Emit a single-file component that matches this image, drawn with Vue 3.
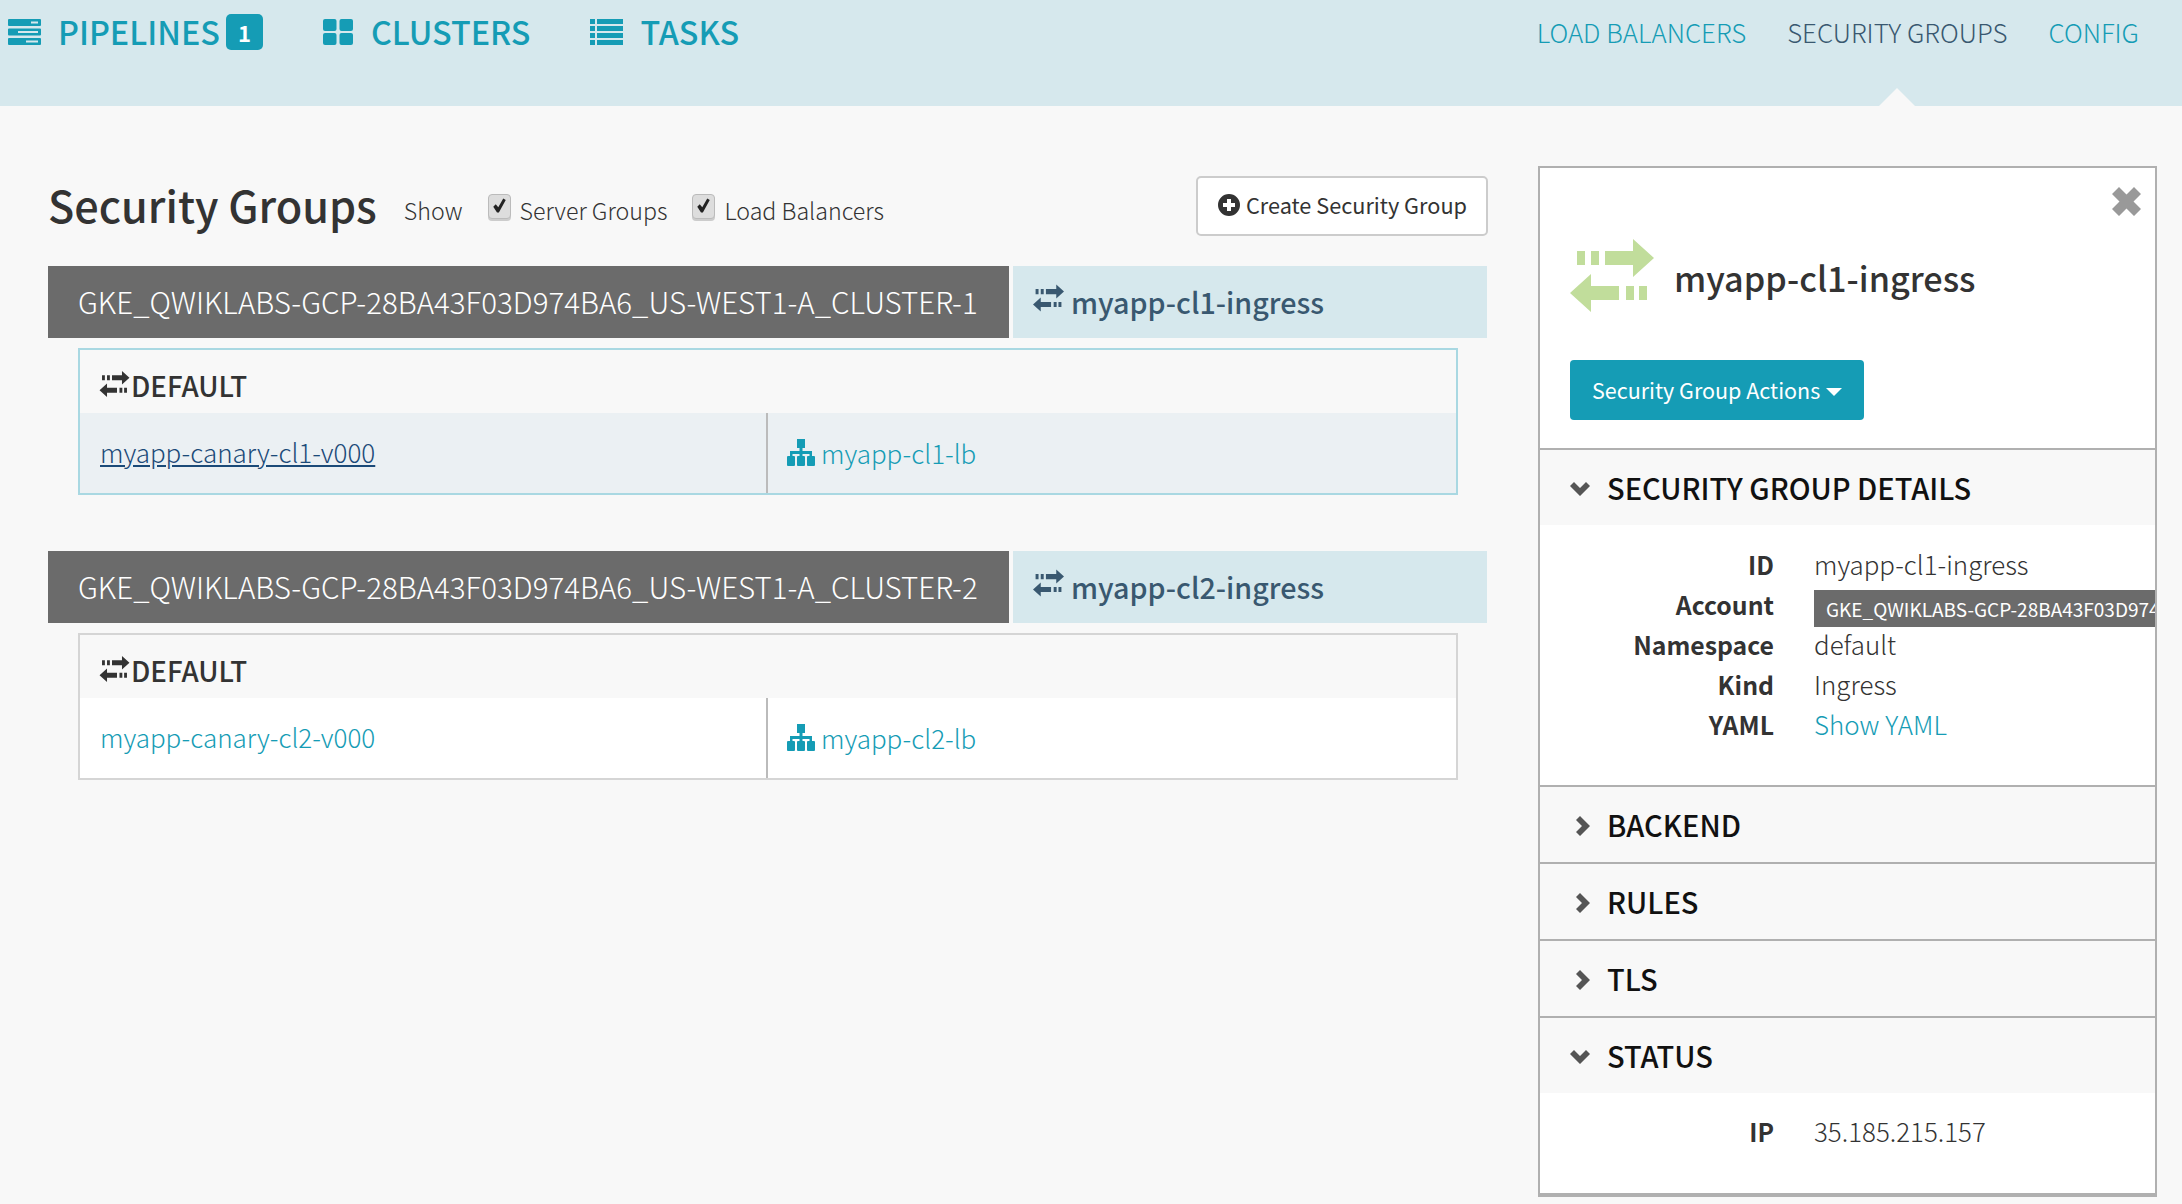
<script setup>
const exchange = 'M7 12h8v14H7zM21 12h8v14h-8zM35 12h28V0l21 19-21 19V26H35zM0 54l21-19v12h28v14H21v12zM56 47h8v14h-8zM69 47h8v14h-8z'
const sitemap = 'M10 0h8v9h-2.500v3H25v5h2a1 1 0 0 1 1 1v8a1 1 0 0 1-1 1h-6a1 1 0 0 1-1-1v-8a1 1 0 0 1 1-1h1.500v-2h-7V17H17a1 1 0 0 1 1 1v8a1 1 0 0 1-1 1h-6a1 1 0 0 1-1-1v-8a1 1 0 0 1 1-1h1.500v-2h-7v2H7a1 1 0 0 1 1 1v8a1 1 0 0 1-1 1H1a1 1 0 0 1-1-1v-8a1 1 0 0 1 1-1h2v-5h9.500V9H10z'

const clusters = [
  {
    account: 'GKE_QWIKLABS-GCP-28BA43F03D974BA6_US-WEST1-A_CLUSTER-1',
    ingress: 'myapp-cl1-ingress',
    serverGroup: 'myapp-canary-cl1-v000',
    loadBalancer: 'myapp-cl1-lb',
    active: true,
  },
  {
    account: 'GKE_QWIKLABS-GCP-28BA43F03D974BA6_US-WEST1-A_CLUSTER-2',
    ingress: 'myapp-cl2-ingress',
    serverGroup: 'myapp-canary-cl2-v000',
    loadBalancer: 'myapp-cl2-lb',
    active: false,
  },
]

const details = [
  { label: 'ID', value: 'myapp-cl1-ingress' },
  { label: 'Account', value: clusters[0].account, chip: true },
  { label: 'Namespace', value: 'default' },
  { label: 'Kind', value: 'Ingress' },
  { label: 'YAML', value: 'Show YAML', link: true },
]
</script>

<template>
  <div class="page">
    <header class="topbar">
      <nav class="primary">
        <a class="primary-item pipelines">
          <svg class="ico-pipelines" viewBox="0 0 33 26">
            <path fill-rule="evenodd" d="M1 0h31a1 1 0 0 1 1 1v5a1 1 0 0 1-1 1H1a1 1 0 0 1-1-1V1a1 1 0 0 1 1-1zm22 2.500v2h7v-2zM1 9.500h31a1 1 0 0 1 1 1v5a1 1 0 0 1-1 1H1a1 1 0 0 1-1-1v-5a1 1 0 0 1 1-1zm9 2.500v2h20v-2zM1 19h31a1 1 0 0 1 1 1v5a1 1 0 0 1-1 1H1a1 1 0 0 1-1-1v-5a1 1 0 0 1 1-1zm17 2.500v2h12v-2z" />
          </svg>
          <span>PIPELINES</span>
          <b class="badge">1</b>
        </a>
        <a class="primary-item clusters">
          <svg class="ico-clusters" viewBox="0 0 30 26">
            <rect width="13.500" height="12" rx="2" />
            <rect x="16.500" width="13.500" height="12" rx="2" />
            <rect y="14" width="13.500" height="12" rx="2" />
            <rect x="16.500" y="14" width="13.500" height="12" rx="2" />
          </svg>
          <span>CLUSTERS</span>
        </a>
        <a class="primary-item tasks">
          <svg class="ico-tasks" viewBox="0 0 33 26">
            <path d="M0 0h5v5H0zM7 0h26v5H7zM0 7h5v5H0zM7 7h26v5H7zM0 14h5v5H0zM7 14h26v5H7zM0 21h5v5H0zM7 21h26v5H7z" />
          </svg>
          <span>TASKS</span>
        </a>
      </nav>
      <nav class="secondary">
        <a>LOAD BALANCERS</a>
        <a class="current">SECURITY GROUPS</a>
        <a>CONFIG</a>
      </nav>
    </header>

    <main class="content">
      <section class="groups">
        <div class="toolbar">
          <h1>Security Groups</h1>
          <span class="show">Show</span>
          <label class="check">
            <span class="box"><svg viewBox="2 1 12 14"><path d="M3 8.500l2-2 2 2.500 4-7 2 1.200-5.500 10H6z" /></svg></span>
            Server Groups
          </label>
          <label class="check">
            <span class="box"><svg viewBox="2 1 12 14"><path d="M3 8.500l2-2 2 2.500 4-7 2 1.200-5.500 10H6z" /></svg></span>
            Load Balancers
          </label>
          <button class="create">
            <svg viewBox="0 0 22 22">
              <path fill-rule="evenodd" d="M11 0a11 11 0 1 1 0 22 11 11 0 0 1 0-22zM9 5v4H5v4h4v4h4v-4h4V9h-4V5z" />
            </svg>
            Create Security Group
          </button>
        </div>

        <article v-for="c in clusters" :key="c.account" class="cluster">
          <div class="cluster-head">
            <div class="account">{{ c.account }}</div>
            <div class="ingress">
              <svg viewBox="0 0 84 73"><path :d="exchange" /></svg>
              {{ c.ingress }}
            </div>
          </div>
          <div class="namespace" :class="{ active: c.active }">
            <div class="ns-title">
              <svg viewBox="0 0 84 73"><path :d="exchange" /></svg>DEFAULT
            </div>
            <div class="ns-row">
              <a class="sg-link">{{ c.serverGroup }}</a>
              <a class="lb-link">
                <svg viewBox="0 0 28 27"><path :d="sitemap" /></svg>
                {{ c.loadBalancer }}
              </a>
            </div>
          </div>
        </article>
      </section>

      <aside class="panel">
        <div class="panel-head">
          <svg class="close" viewBox="0 0 29 29">
            <path d="M7 0l7.500 7.500L22 0l7 7-7.500 7.500L29 22l-7 7-7.500-7.500L7 29l-7-7 7.500-7.500L0 7z" />
          </svg>
          <div class="panel-title">
            <svg viewBox="0 0 84 73"><path :d="exchange" /></svg>
            <h2>myapp-cl1-ingress</h2>
          </div>
          <button class="actions"><span>Security Group Actions</span><i class="caret"></i></button>
        </div>

        <div class="sec-head">
          <svg class="chev-down" viewBox="0 0 20 14"><path d="M4 0l6 6 6-6 4 4-10 10L0 4z" /></svg>
          <span>SECURITY GROUP DETAILS</span>
        </div>
        <dl class="sec-body details">
          <template v-for="d in details" :key="d.label">
            <dt>{{ d.label }}</dt>
            <dd>
              <span v-if="d.chip" class="chip">{{ d.value }}</span>
              <a v-else-if="d.link" class="yaml">{{ d.value }}</a>
              <template v-else>{{ d.value }}</template>
            </dd>
          </template>
        </dl>

        <div v-for="s in ['BACKEND', 'RULES', 'TLS']" :key="s" class="sec-head closed">
          <svg class="chev-right" viewBox="0 0 14 20"><path d="M4 0l10 10L4 20l-4-4 6-6-6-6z" /></svg>
          <span>{{ s }}</span>
        </div>

        <div class="sec-head">
          <svg class="chev-down" viewBox="0 0 20 14"><path d="M4 0l6 6 6-6 4 4-10 10L0 4z" /></svg>
          <span>STATUS</span>
        </div>
        <dl class="sec-body status">
          <dt>IP</dt>
          <dd>35.185.215.157</dd>
        </dl>
      </aside>
    </main>
  </div>
</template>

<style>
html,
body {
  margin: 0;
  background: #f8f8f8;
  overflow: hidden;
}
</style>

<style scoped>
.page {
  height: 1204px;
  overflow: hidden;
  font-family: 'Noto Sans CJK JP', 'Source Sans Pro', 'Open Sans', sans-serif;
  color: #333;
  background: #f8f8f8;
}

svg {
  display: block;
  flex: none;
  fill: currentColor;
}

/* top navigation */
.topbar {
  display: flex;
  justify-content: space-between;
  height: 106px;
  background: #d6e8ed;
}

.primary {
  display: flex;
  align-items: flex-start;
  padding: 14px 0 0 8px;
  color: #159cb5;
}

.primary-item {
  display: flex;
  align-items: center;
  height: 36px;
  font-size: 32.300px;
  line-height: 36px;
  font-weight: 500;
}

.primary-item span {
  padding-bottom: 3px;
}

.ico-pipelines {
  width: 33px;
  height: 26px;
  margin-right: 17px;
}

.ico-clusters {
  width: 30px;
  height: 26px;
  margin-right: 18px;
}

.ico-tasks {
  width: 33px;
  height: 26px;
  margin-right: 17px;
}

.clusters {
  margin-left: 60px;
}

.tasks {
  margin-left: 60px;
}

.badge {
  width: 37px;
  height: 36px;
  margin-left: 6px;
  border-radius: 5px;
  background: #159cb5;
  color: #fff;
  font-size: 22px;
  text-align: center;
}

.secondary {
  display: flex;
  gap: 41px;
  padding: 14px 43px 0 0;
  font-size: 25.800px;
  line-height: 36px;
  font-weight: 300;
  color: #159cb5;
}

.secondary a {
  position: relative;
  height: 36px;
}

.secondary .current {
  color: #395870;
}

.secondary .current::after {
  content: '';
  position: absolute;
  left: 50%;
  top: 74px;
  margin-left: -18px;
  border-left: 18px solid transparent;
  border-right: 18px solid transparent;
  border-bottom: 18px solid #f8f8f8;
}

/* main */
.content {
  display: flex;
  align-items: flex-start;
  padding: 60px 0 0 48px;
}

.groups {
  width: 1439px;
  padding-top: 10px;
}

.toolbar {
  display: flex;
  align-items: center;
  height: 60px;
  margin-bottom: 30px;
  font-size: 23.200px;
  line-height: 30px;
  font-weight: 300;
}

h1 {
  margin: 0 0 4px;
  font-size: 43.200px;
  line-height: 48px;
  font-weight: 500;
}

.show {
  margin-left: 27px;
  margin-top: 8px;
}

.check {
  display: flex;
  align-items: center;
  margin-left: 25px;
  margin-top: 8px;
}

.box {
  display: flex;
  align-items: center;
  justify-content: center;
  width: 21px;
  height: 23px;
  margin: -8px 9px 0 0;
  border: 1px solid #bbb;
  border-radius: 4px;
  background: #ddd;
  box-shadow: 0 2px 0 #ccc;
  color: #222;
}

.box svg {
  width: 15px;
  height: 18px;
}

.create {
  display: flex;
  align-items: center;
  gap: 6px;
  height: 60px;
  margin: 0 -1px 0 auto;
  padding: 0 19px 2px 20px;
  border: 2px solid #ccc;
  border-radius: 5px;
  background: #fff;
  color: #333;
  font: inherit;
  font-size: 21.700px;
  font-weight: 400;
}

.create svg {
  width: 22px;
  height: 22px;
}

.cluster {
  margin-bottom: 56px;
}

.cluster-head {
  display: flex;
  gap: 4px;
  height: 72px;
}

.account {
  width: 961px;
  padding-left: 30px;
  box-sizing: border-box;
  background: #6b6b6b;
  color: #fff;
  font-size: 29.500px;
  line-height: 70px;
  font-weight: 300;
  white-space: nowrap;
}

.ingress {
  display: flex;
  align-items: center;
  gap: 7px;
  flex: 1;
  padding: 0 0 2px 20px;
  background: #d6e8ed;
  color: #395870;
  font-size: 28.700px;
  font-weight: 500;
}

.ingress svg {
  width: 31px;
  height: 28px;
  margin-top: -6px;
}

.namespace {
  width: 1380px;
  margin: 10px 0 0 30px;
  border: 2px solid #d5d5d5;
  box-sizing: border-box;
}

.namespace.active {
  border-color: #a9d8e2;
}

.ns-title {
  display: flex;
  align-items: center;
  height: 63px;
  padding: 7px 0 0 19px;
  box-sizing: border-box;
  font-size: 27.700px;
  font-weight: 500;
}

.ns-title svg {
  width: 31px;
  height: 26px;
  margin: -3px 1px 0 0;
}

.ns-row {
  display: flex;
  height: 80px;
  background: #fff;
  font-size: 26px;
  line-height: 78px;
  font-weight: 300;
  color: #159cb5;
}

.active .ns-row {
  background: #ebf0f3;
}

.sg-link {
  width: 688px;
  padding-left: 20px;
  box-sizing: border-box;
  border-right: 2px solid #bbb;
}

.active .sg-link {
  color: #1b4a78;
  text-decoration: underline;
}

.lb-link {
  display: flex;
  align-items: center;
  gap: 6px;
  padding-left: 19px;
}

.lb-link svg {
  width: 28px;
  height: 27px;
  margin-top: -2px;
}

/* side panel */
.panel {
  width: 619px;
  margin-left: 51px;
  box-sizing: border-box;
  border: 2px solid #b0b0b0;
  background: #fff;
  overflow: hidden;
}

.panel-head {
  position: relative;
  height: 282px;
  padding: 71px 0 0 30px;
  box-sizing: border-box;
  border-bottom: 2px solid #b0b0b0;
}

.close {
  position: absolute;
  top: 19px;
  right: 14px;
  width: 29px;
  height: 29px;
  color: #999;
}

.panel-title {
  display: flex;
  align-items: center;
  gap: 20px;
  height: 73px;
  color: #c1dd9b;
}

.panel-title svg {
  width: 84px;
  height: 73px;
}

h2 {
  margin: 3px 0 0;
  color: #333;
  font-size: 34.200px;
  line-height: 48px;
  font-weight: 500;
}

.actions {
  display: flex;
  align-items: center;
  height: 60px;
  margin-top: 48px;
  padding: 0 22px;
  border: 0;
  border-radius: 4px;
  background: #159cb5;
  color: #fff;
  font: inherit;
  font-size: 21.500px;
  font-weight: 400;
}

.actions span {
  padding-bottom: 2px;
}

.caret {
  margin: 3px 0 0 6px;
  border-left: 8px solid transparent;
  border-right: 8px solid transparent;
  border-top: 8px solid #fff;
}

.sec-head {
  display: flex;
  align-items: center;
  height: 75px;
  padding-left: 30px;
  background: #f8f8f8;
  color: #111;
  font-size: 29px;
  font-weight: 500;
}

.sec-head.closed {
  border-bottom: 2px solid #b0b0b0;
}

.sec-head span {
  padding-bottom: 2px;
}

.chev-down {
  width: 20px;
  height: 14px;
  margin: 2px 17px 0 0;
  color: #555;
}

.chev-right {
  width: 14px;
  height: 20px;
  margin: 3px 17px 0 6px;
  color: #555;
}

.sec-body {
  display: grid;
  grid-template-columns: 234px minmax(0, 1fr);
  column-gap: 40px;
  grid-auto-rows: 40px;
  align-content: start;
  margin: 0;
  box-sizing: border-box;
  border-bottom: 2px solid #b0b0b0;
  font-size: 25.900px;
  line-height: 40px;
}

.details {
  height: 262px;
  padding-top: 19px;
}

.status {
  height: 102px;
  padding-top: 18px;
}

dt {
  font-size: 24.800px;
  text-align: right;
  font-weight: 700;
}

dd {
  margin: 0;
  font-weight: 300;
  white-space: nowrap;
}

.chip {
  display: block;
  height: 37px;
  margin-top: 6px;
  padding-left: 12px;
  background: #6b6b6b;
  color: #fff;
  font-size: 19px;
  line-height: 37px;
  font-weight: 400;
}

.yaml {
  color: #159cb5;
}
</style>
